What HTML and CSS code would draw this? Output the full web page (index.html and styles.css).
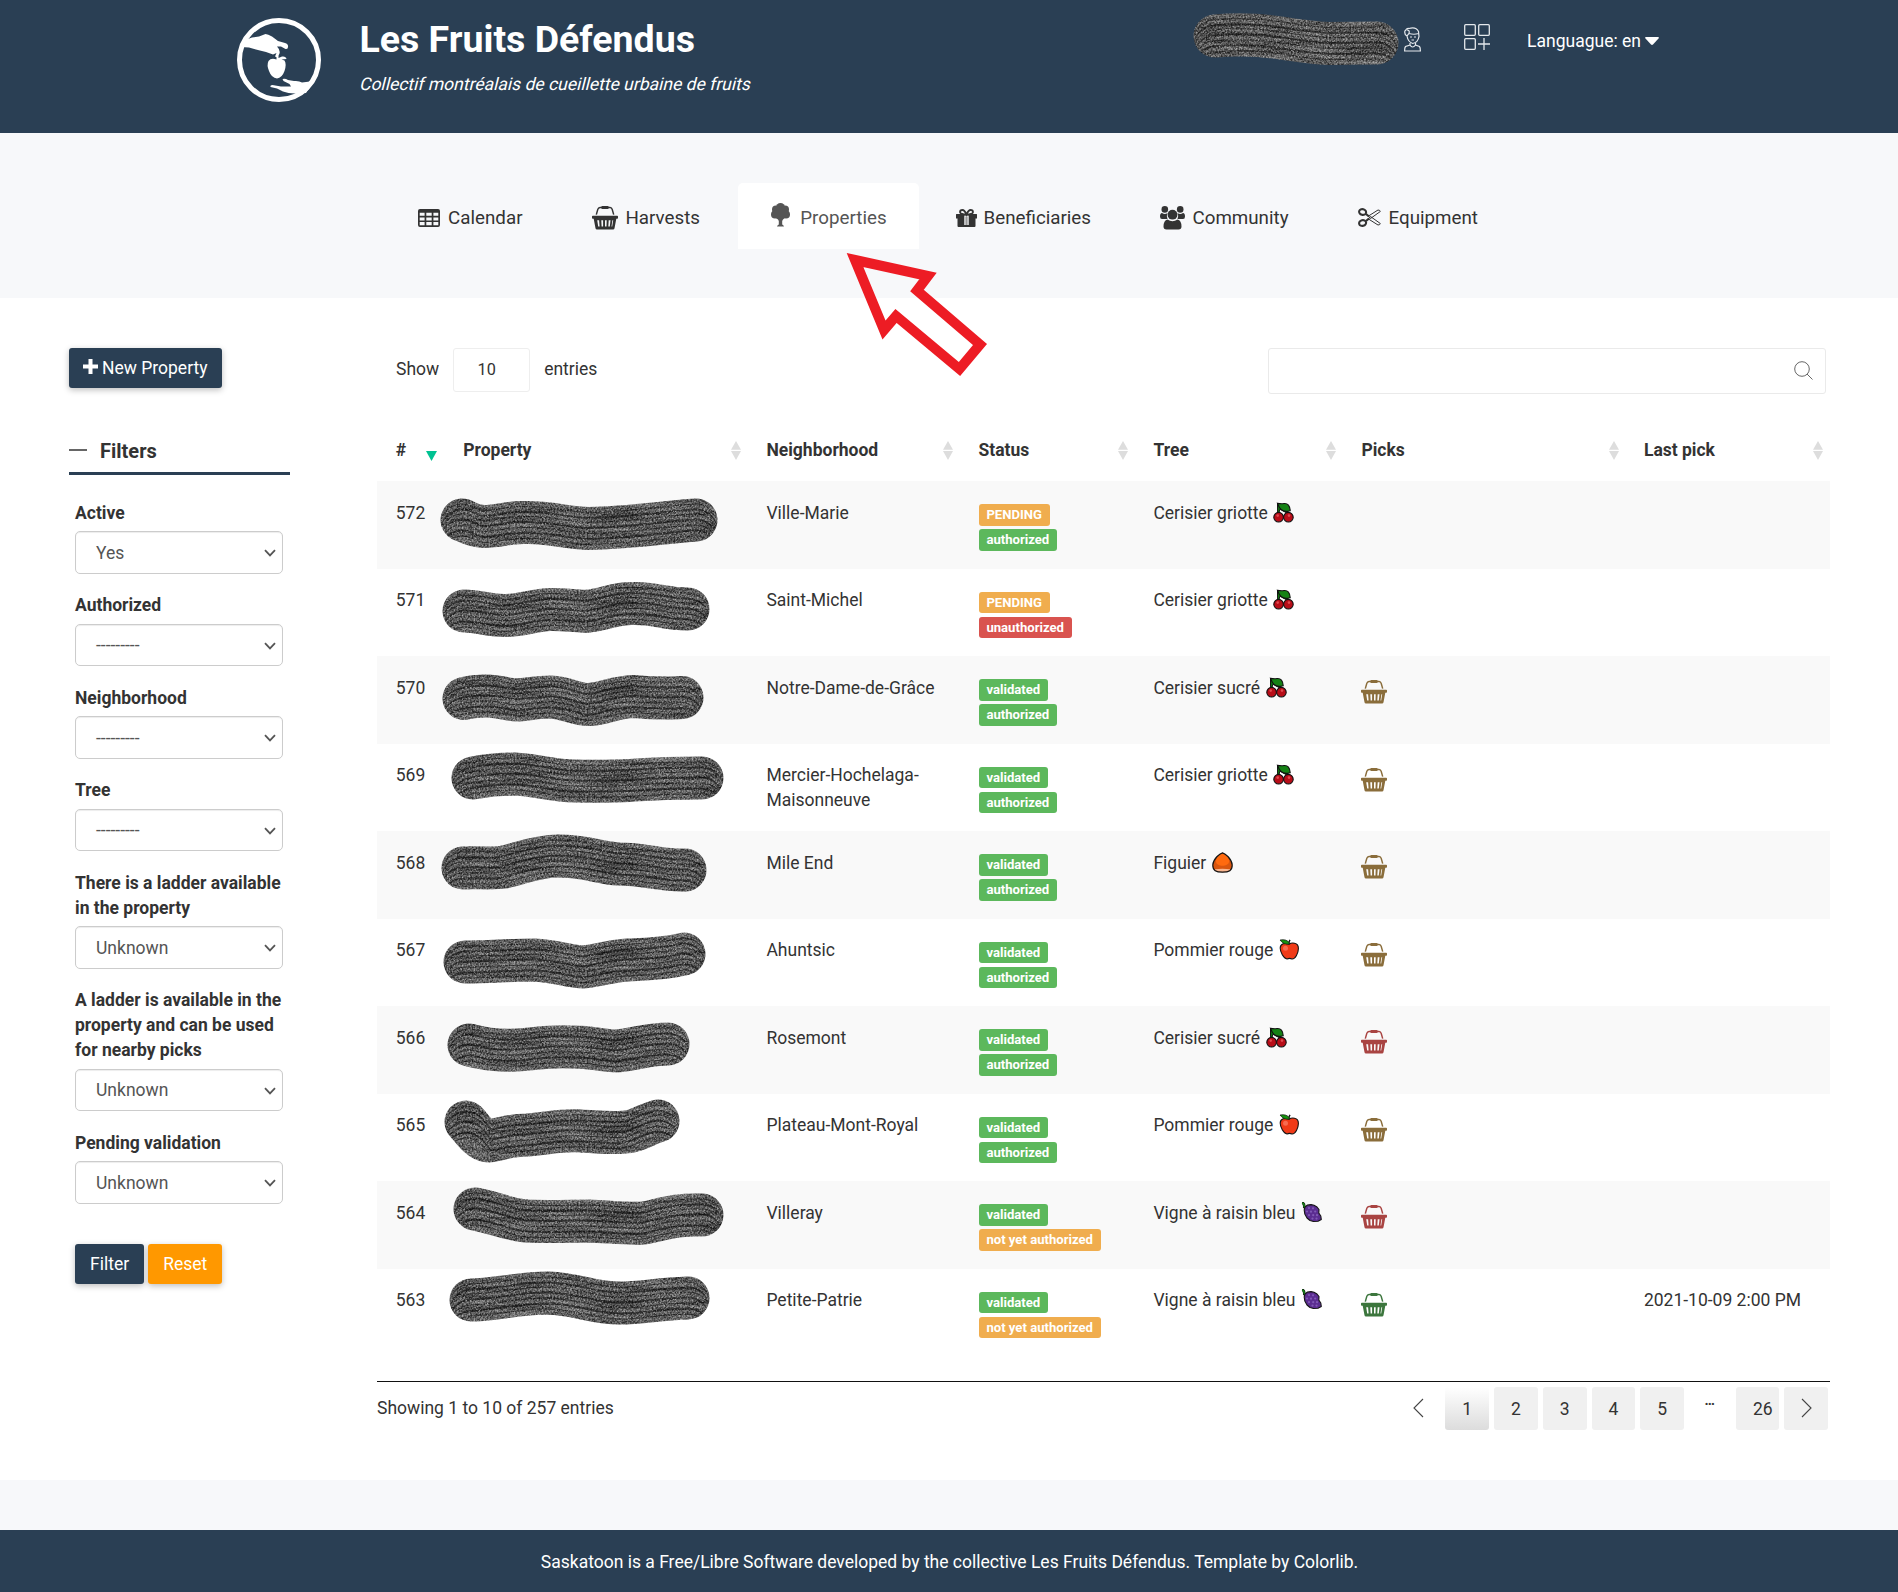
FILE: index.html
```html
<!DOCTYPE html>
<html lang="en">
<head>
<meta charset="utf-8">
<title>Les Fruits Défendus - Properties</title>
<link rel="stylesheet" href="styles.css">
</head>
<body>
<svg class="defs" aria-hidden="true">
  <defs>
    <filter id="ink" filterUnits="userSpaceOnUse" x="-10" y="-10" width="320" height="110" color-interpolation-filters="sRGB">
      <feTurbulence type="fractalNoise" baseFrequency="0.02 0.22" numOctaves="2" seed="4" result="streak"/>
      <feTurbulence type="fractalNoise" baseFrequency="0.6" numOctaves="2" seed="9" result="grain"/>
      <feColorMatrix in="streak" type="matrix" values=".3 0 0 0 .05  .3 0 0 0 .05  .3 0 0 0 .05  0 0 0 0 1" result="s"/>
      <feColorMatrix in="grain" type="matrix" values=".8 0 0 0 -0.22  .8 0 0 0 -0.22  .8 0 0 0 -0.22  0 0 0 0 1" result="g"/>
      <feComposite in="s" in2="g" operator="arithmetic" k2="1" k3="1" result="mix"/>
      <feOffset in="SourceAlpha" dy="5" result="a1"/><feOffset in="SourceAlpha" dy="6" result="b1"/>
      <feOffset in="SourceAlpha" dy="10" result="a2"/><feOffset in="SourceAlpha" dy="12" result="b2"/>
      <feOffset in="SourceAlpha" dy="15" result="a3"/><feOffset in="SourceAlpha" dy="16" result="b3"/>
      <feOffset in="SourceAlpha" dy="20" result="a4"/><feOffset in="SourceAlpha" dy="22" result="b4"/>
      <feOffset in="SourceAlpha" dy="26" result="a5"/><feOffset in="SourceAlpha" dy="27" result="b5"/>
      <feOffset in="SourceAlpha" dy="31" result="a6"/><feOffset in="SourceAlpha" dy="33" result="b6"/>
      <feOffset in="SourceAlpha" dy="37" result="a7"/><feOffset in="SourceAlpha" dy="38" result="b7"/>
      <feComposite in="a1" in2="b1" operator="out" result="l1"/>
      <feComposite in="a2" in2="b2" operator="out" result="l2"/>
      <feComposite in="a3" in2="b3" operator="out" result="l3"/>
      <feComposite in="a4" in2="b4" operator="out" result="l4"/>
      <feComposite in="a5" in2="b5" operator="out" result="l5"/>
      <feComposite in="a6" in2="b6" operator="out" result="l6"/>
      <feComposite in="a7" in2="b7" operator="out" result="l7"/>
      <feMerge result="bands"><feMergeNode in="l1"/><feMergeNode in="l2"/><feMergeNode in="l3"/><feMergeNode in="l4"/><feMergeNode in="l5"/><feMergeNode in="l6"/><feMergeNode in="l7"/></feMerge>
      <feDisplacementMap in="bands" in2="grain" scale="3" xChannelSelector="R" yChannelSelector="G" result="rough"/>
      <feComponentTransfer in="rough" result="lines"><feFuncA type="linear" slope=".55"/></feComponentTransfer>
      <feMerge result="all"><feMergeNode in="mix"/><feMergeNode in="lines"/></feMerge>
      <feComposite in="all" in2="SourceAlpha" operator="in"/>
    </filter>
  </defs>
  <symbol id="basket" viewBox="0 0 26 24">
    <path d="M4.300 8.600 5.800 3.400Q6.300 1.600 8 1.500H18Q19.700 1.600 20.200 3.400L21.700 8.600" fill="none" stroke="currentColor" stroke-width="1.500"/>
    <rect x="9.300" y="0" width="7.400" height="2.900" rx="1" fill="currentColor"/>
    <path fill="currentColor" fill-rule="evenodd" d="M.8 9.700H25.200Q26 9.700 26 10.500V12Q26 12.800 25.200 12.800H24.300L22.500 22.300Q22.300 23.600 21 23.600H5Q3.700 23.600 3.500 22.300L1.700 12.800H.8Q0 12.800 0 12V10.500Q0 9.700.8 9.700ZM5.200 14.300 6.200 20.500H7.600L7.100 14.300ZM9.300 14.300 9.600 20.500H11.100V14.300ZM13 14.300V20.500H14.500L14.700 14.300ZM16.700 14.300 16.300 20.500H17.800L18.500 14.300ZM20.400 14.300 19.500 20.500H20.200L21.200 14.300Z"/>
  </symbol>
  <symbol id="cherry" viewBox="0 0 21 21">
    <path d="M4.500 1 4.600 10.500 6 10.500 7 7 14.500 11.500 15 9.500 8 5Z" fill="#0b7a0b" stroke="#111" stroke-width="1"/>
    <path d="M4.500 1.200Q8 2 11 1.500 16.800 1 17.200 8.800 11 10.500 8 7.500 6 5.500 4.500 1.200Z" fill="#158215" stroke="#111" stroke-width="1.100"/>
    <circle cx="5.600" cy="15.200" r="4.800" fill="#b80d18" stroke="#111" stroke-width="1.100"/>
    <circle cx="15.400" cy="15.200" r="4.800" fill="#b80d18" stroke="#111" stroke-width="1.100"/>
    <circle cx="4.700" cy="13.600" r="1.300" fill="#e04a50"/><circle cx="16" cy="13.600" r="1.300" fill="#e04a50"/>
  </symbol>
  <symbol id="fig" viewBox="0 0 21 21">
    <path d="M10.500.8C13 1.500 19.800 6.500 20.200 13 20.300 18.500 17 20.200 10.500 20.200S.7 18.500.8 13C1.200 6.500 8 1.500 10.500.8Z" fill="#d9560f"/>
    <path d="M10.500 1C14 2.500 17.500 6 17 10 16 15 5 15 4 10 3.500 6 7 2.500 10.500 1Z" fill="#ff6a0f"/>
    <path d="M2.500 17.300Q10.500 16 18.500 17.300 16.500 20 10.500 20T2.500 17.300Z" fill="#f9b690"/>
    <path d="M10.500.8C13 1.500 19.800 6.500 20.200 13 20.300 18.500 17 20.200 10.500 20.200S.7 18.500.8 13C1.200 6.500 8 1.500 10.500.8Z" fill="none" stroke="#151515" stroke-width="1.200"/>
  </symbol>
  <symbol id="apple" viewBox="0 0 21 21">
    <path d="M10 5.200C12 3.800 19.500 2.500 19.400 9.500 19.300 14 16.500 20.200 13 20 11 19 10 19 8 20 4.500 19.500 1.200 13 1.200 9 1.300 4.500 6 3.500 10 5.200Z" fill="#f03a17" stroke="#151515" stroke-width="1.100"/>
    <circle cx="6.500" cy="9.200" r="2.500" fill="#f76b50"/>
    <path d="M10 5Q9.500 3 11 .8" stroke="#151515" stroke-width="1.500" fill="none"/>
    <path d="M1 1Q8-.5 11 4.800 5 6.500 1 1Z" fill="#15940f" stroke="#151515" stroke-width=".7"/>
  </symbol>
  <symbol id="grape" viewBox="0 0 21 21">
    <path d="M1 .8Q3.500 1 3.300 5L6 6" stroke="#111" stroke-width="2.600" fill="none"/>
    <path d="M1.200 1Q3.500 1.500 3.300 5L6 6.500" stroke="#168b16" stroke-width="1.400" fill="none"/>
    <path d="M4 5 6.500 3 10 2.600 13 3.200 16 5 18 7.500 17.800 11 19.800 14 20.300 17.500 17 19.300 12.500 19.500 9 18.500 6 16 3.800 12 3.200 8Z" fill="#5b2d91" stroke="#151515" stroke-width="1.100" stroke-linejoin="round"/>
    <g fill="#8059b5"><circle cx="8" cy="6" r="1.100"/><circle cx="12" cy="6.300" r="1.100"/><circle cx="6" cy="9.500" r="1.100"/><circle cx="10" cy="9.700" r="1.100"/><circle cx="14.200" cy="9.500" r="1.100"/><circle cx="8" cy="13.200" r="1.100"/><circle cx="12.200" cy="13.200" r="1.100"/><circle cx="16" cy="13.200" r="1.100"/><circle cx="11.500" cy="16.600" r="1.100"/><circle cx="15.500" cy="16.600" r="1.100"/></g>
  </symbol>
  <symbol id="sort" viewBox="0 0 10 19"><path d="M5 0 10 8.700H0ZM5 19 0 10H10Z" fill="#ddd"/></symbol>
  <symbol id="chevron" viewBox="0 0 12 8"><path d="M1 1.200 6 6.400 11 1.200" fill="none" stroke="#555" stroke-width="1.800"/></symbol>
</svg>

<header class="header">
  <svg class="logo" viewBox="0 0 84 84">
    <circle cx="42" cy="42" r="39.500" fill="none" stroke="#fff" stroke-width="5"/>
    <path fill="#fff" d="M4 29 8 22 15 19.500 22 18.500 28.500 16Q31 16 35 18.500L41 23 48 25Q51.500 26 51 29 51 31.500 48.500 31L44 28.500 40 28.500Q43.500 32 42.500 35.500L40.500 39.500 38 38.500 39.500 35 36 36.500 29 34Q20 32 12 29.500Z"/>
    <path fill="#fff" d="M39.500 41.500Q34 39.500 31.500 43 29.500 47 32 53 34.500 60 40 60.500 45 60 47.500 53 49.800 46 47.500 42.500L44.500 41.500 49.500 41Q49 38 45 38.500L41.500 40 41.500 37.500H39.500Z"/>
    <path fill="#fff" d="M45.500 61Q48 60 51 62L57 63Q62 62.500 65 64.500L77 63 69 75 61 75.500Q52 76 46 73.500L40 70.500 33.500 69Q33 67 35.500 67L44 68.500 54 68.500 52.500 66 46.500 63Z"/>
  </svg>
  <div class="brand">
    <h1 class="brand-name">Les Fruits Défendus</h1>
    <p class="brand-tag">Collectif montréalais de cueillette urbaine de fruits</p>
  </div>
  <div class="tools">
    <svg class="user-scribble" viewBox="0 0 206 52"><path class="ink" d="M22 22Q55 19 88 24T135 29.500L184 29"/></svg>
    <svg class="user-icon" viewBox="0 0 17 25" fill="none" stroke="#e4e8ec" stroke-width="1.200"><path d="M1.500 4Q2 1 5 1.500 12-.5 14.500 4.500L15 9.500Q14 15.500 8.700 16.500 4 15 3 9L5 6.500Q10 8 14.500 6.500M3 9Q0 7.500 1 3.500M3 3Q6 3 5 6.500M6 10H8M10 10H12M7.500 13H10M6 16V18L1.500 19.500Q.6 20.500.6 24H16.400Q16.400 20.500 15.500 19.500L11.500 18V16M6 18Q8.500 22 11.500 18"/></svg>
    <svg class="apps-icon" viewBox="0 0 26 26" fill="none" stroke="#e4e8ec" stroke-width="1.300"><rect x=".7" y=".7" width="10.600" height="10.600" rx="1"/><rect x="14.700" y=".7" width="10.600" height="10.600" rx="1"/><rect x=".7" y="14.700" width="10.600" height="10.600" rx="1"/><path d="M20 14V26M14 20H26"/></svg>
    <a class="lang">Languague: en<svg class="caret" viewBox="0 0 14 8"><path d="M1 0H13Q14.500.3 13.500 1.500L8 7.500Q7 8.300 6 7.500L.5 1.500Q-.5.3 1 0Z" fill="#fff"/></svg></a>
  </div>
</header>

<nav class="nav">
  <ul class="tabs">
    <li class="tab"><svg class="i-cal" viewBox="0 0 22 18"><path fill="currentColor" fill-rule="evenodd" d="M2 0H20Q22 0 22 2V16Q22 18 20 18H2Q0 18 0 16V2Q0 0 2 0ZM1.700 3.700V6.800H6.600V3.700ZM8.300 3.700V6.800H13.700V3.700ZM15.400 3.700V6.800H20.300V3.700ZM1.700 8.400V11.500H6.600V8.400ZM8.300 8.400V11.500H13.700V8.400ZM15.400 8.400V11.500H20.300V8.400ZM1.700 13.100V16.300H6.600V13.100ZM8.300 13.100V16.300H13.700V13.100ZM15.400 13.100V16.300H20.300V13.100Z"/></svg>Calendar</li>
    <li class="tab"><svg class="i-basket"><use href="#basket"/></svg>Harvests</li>
    <li class="tab tab-active"><svg class="i-tree" viewBox="0 0 19 24" fill="currentColor"><circle cx="9.500" cy="4.500" r="4.500"/><circle cx="5" cy="6.500" r="4"/><circle cx="14" cy="6.500" r="4"/><circle cx="4" cy="11.500" r="4"/><circle cx="15" cy="11.500" r="4"/><path d="M4 6H15V14L12 16.500 11.200 18V21.500Q12.500 22 13 23.500H6Q6.500 22 7.800 21.500V18L7 16.500 4 14.500Z"/></svg>Properties</li>
    <li class="tab"><svg class="i-gift" viewBox="0 0 21 18"><path fill="currentColor" d="M.5 5H20.500Q21 5 21 5.500V9.500H19.500V17Q19.500 18 18.500 18H2.500Q1.500 18 1.500 17V9.500H0V5.500Q0 5 .5 5Z"/><path d="M8.300 6.500H12.700V16H8.300Z" fill="#f7f8fa"/><path d="M9.400 7.500H11.600V16H9.400Z" fill="#999"/><path d="M10.500 5.500Q8.500 1 6.500 1 4 1 4 3.200 4.200 5.500 10.500 5.500 16.800 5.500 17 3.200 17 1 14.500 1 12.500 1 10.500 5.500Z" fill="#f7f8fa" stroke="currentColor" stroke-width="1.800"/></svg>Beneficiaries</li>
    <li class="tab"><svg class="i-users" viewBox="0 0 25 24" fill="currentColor"><circle cx="4.800" cy="3.400" r="3.300"/><circle cx="20.200" cy="3.400" r="3.300"/><path d="M2 7Q4.800 9 7.500 7 6 10.500 7.500 13H2Q0 13 0 10.500 0 7 2 7ZM23 7Q20.200 9 17.500 7 19 10.500 17.500 13H23Q25 13 25 10.500 25 7 23 7Z"/><circle cx="12.500" cy="8.700" r="4.900"/><path d="M7.500 13.500Q12.500 17 17.500 13.500 21.500 14.500 21.500 20.500 21.500 23.500 18.500 23.500H6.500Q3.500 23.500 3.500 20.500 3.500 14.500 7.500 13.500Z"/></svg>Community</li>
    <li class="tab"><svg class="i-cut" viewBox="0 0 23 19" fill="none" stroke="currentColor"><ellipse cx="4.600" cy="4" rx="3.500" ry="2.800" stroke-width="2.100" transform="rotate(15 4.600 4)"/><ellipse cx="4.600" cy="15" rx="3.500" ry="2.800" stroke-width="2.100" transform="rotate(-15 4.600 15)"/><path d="M8 6 11 8.500M8 13 11 10.500" stroke-width="2.200"/><path d="M10.500 8 20 2Q22 2 22.300 3.500L12.500 10.500ZM10.500 11 20 17Q22 17 22.300 15.500L12.500 8.500Z" stroke-width="1"/></svg>Equipment</li>
  </ul>
  <svg class="arrow" viewBox="0 0 144 130"><path d="M10 10 83 26 72 40.500 135 94.500 114.500 119 51 66 39 80Z" fill="none" stroke="#ed1c24" stroke-width="10"/></svg>
</nav>

<main class="main">
  <aside class="side">
    <a class="btn btn-new"><svg viewBox="0 0 15 15"><path d="M5.500 0H9.500V5.500H15V9.500H9.500V15H5.500V9.500H0V5.500H5.500Z" fill="#fff"/></svg>New Property</a>
    <h2 class="side-title"><span class="dash"></span>Filters</h2>
    <form class="filters">
      <label class="label">Active</label>
      <div class="select">Yes<svg><use href="#chevron"/></svg></div>
      <label class="label">Authorized</label>
      <div class="select">---------<svg><use href="#chevron"/></svg></div>
      <label class="label">Neighborhood</label>
      <div class="select">---------<svg><use href="#chevron"/></svg></div>
      <label class="label">Tree</label>
      <div class="select">---------<svg><use href="#chevron"/></svg></div>
      <label class="label">There is a ladder available<br>in the property</label>
      <div class="select">Unknown<svg><use href="#chevron"/></svg></div>
      <label class="label">A ladder is available in the<br>property and can be used<br>for nearby picks</label>
      <div class="select">Unknown<svg><use href="#chevron"/></svg></div>
      <label class="label">Pending validation</label>
      <div class="select">Unknown<svg><use href="#chevron"/></svg></div>
      <div class="actions"><a class="btn btn-filter">Filter</a><a class="btn btn-reset">Reset</a></div>
    </form>
  </aside>

  <section class="listing">
    <div class="controls">
      <span>Show</span><span class="length">10</span><span>entries</span>
      <div class="search"><svg viewBox="0 0 19 19" fill="none" stroke="#555" stroke-width=".9"><circle cx="8" cy="8" r="7.300"/><path d="M13 13 18.500 18.500"/></svg></div>
    </div>
    <table class="table">
      <thead>
        <tr><th>#<svg class="sorted" viewBox="0 0 11 10"><path d="M0 0H11L5.500 10Z" fill="#00c292"/></svg></th><th>Property<svg><use href="#sort"/></svg></th><th>Neighborhood<svg><use href="#sort"/></svg></th><th>Status<svg><use href="#sort"/></svg></th><th>Tree<svg><use href="#sort"/></svg></th><th>Picks<svg><use href="#sort"/></svg></th><th>Last pick<svg><use href="#sort"/></svg></th></tr>
      </thead>
      <tbody>
        <tr><td>572</td><td><svg class="scribble"><path class="ink" d="M18 39C24 41 28 45 40 45.500 56 45 66 41 82 41.500 106 41 122 47 145 47.500 180 47 215 42 252 39"/></svg></td><td>Ville-Marie</td><td><span class="tag warn">PENDING</span><br><span class="tag ok">authorized</span></td><td>Cerisier griotte <svg class="fruit"><use href="#cherry"/></svg></td><td></td><td></td></tr>
        <tr><td>571</td><td><svg class="scribble"><path class="ink" d="M20 42C36 42 44 47 62 46.500 80 46 90 41 106 40.500 122 40 134 43 145 42 162 40 172 34 189 34.500 212 34 220 40 244 40"/></svg></td><td>Saint-Michel</td><td><span class="tag warn">PENDING</span><br><span class="tag bad">unauthorized</span></td><td>Cerisier griotte <svg class="fruit"><use href="#cherry"/></svg></td><td></td><td></td></tr>
        <tr><td>570</td><td><svg class="scribble"><path class="ink" d="M20 42.500C30 40 36 40 43 40 56 40 62 44 74 44 86 43 94 41 106 41 124 42 132 49 146 48.500 162 47 172 41 189 40.500 206 42 216 43 238 41.500"/></svg></td><td>Notre-Dame-de-Grâce</td><td><span class="tag ok">validated</span><br><span class="tag ok">authorized</span></td><td>Cerisier sucré <svg class="fruit"><use href="#cherry"/></svg></td><td><svg class="pick brown"><use href="#basket"/></svg></td><td></td></tr>
        <tr><td>569</td><td><svg class="scribble"><path class="ink" d="M29 34C44 31 56 30 70 30 94 31 108 37 130 37 152 38 166 37 185 36.500 206 35 216 34 258 34"/></svg></td><td>Mercier-Hochelaga-Maisonneuve</td><td><span class="tag ok">validated</span><br><span class="tag ok">authorized</span></td><td>Cerisier griotte <svg class="fruit"><use href="#cherry"/></svg></td><td><svg class="pick brown"><use href="#basket"/></svg></td><td></td></tr>
        <tr><td>568</td><td><svg class="scribble"><path class="ink" d="M19 37C34 36 46 38 60 36 76 33 92 25 114 25 142 25 156 32 175 33 200 33 220 40 241 39"/></svg></td><td>Mile End</td><td><span class="tag ok">validated</span><br><span class="tag ok">authorized</span></td><td>Figuier <svg class="fruit"><use href="#fig"/></svg></td><td><svg class="pick brown"><use href="#basket"/></svg></td><td></td></tr>
        <tr><td>567</td><td><svg class="scribble"><path class="ink" d="M21 43C45 43 66 41 90 41 114 42 124 48 140 48 158 46 166 42 184 41 204 40 220 40 240 35"/></svg></td><td>Ahuntsic</td><td><span class="tag ok">validated</span><br><span class="tag ok">authorized</span></td><td>Pommier rouge <svg class="fruit"><use href="#apple"/></svg></td><td><svg class="pick brown"><use href="#basket"/></svg></td><td></td></tr>
        <tr><td>566</td><td><svg class="scribble"><path class="ink" d="M25 39C40 43 56 45 72 44 90 43 104 40 126 41 148 40 154 45 174 45 192 43 206 38 224 38"/></svg></td><td>Rosemont</td><td><span class="tag ok">validated</span><br><span class="tag ok">authorized</span></td><td>Cerisier sucré <svg class="fruit"><use href="#cherry"/></svg></td><td><svg class="pick red"><use href="#basket"/></svg></td><td></td></tr>
        <tr><td>565</td><td><svg class="scribble"><path class="ink" d="M22 28C28 34 34 45 44 47 58 45 66 41 84 41 106 39 118 36 136 37 158 38 174 40 188 37 198 34 206 29 214 27"/></svg></td><td>Plateau-Mont-Royal</td><td><span class="tag ok">validated</span><br><span class="tag ok">authorized</span></td><td>Pommier rouge <svg class="fruit"><use href="#apple"/></svg></td><td><svg class="pick brown"><use href="#basket"/></svg></td><td></td></tr>
        <tr><td>564</td><td><svg class="scribble"><path class="ink" d="M31 28C48 31 62 38 82 40 106 41 126 40 145 40 168 41 184 43 200 42 220 38 232 33 258 34"/></svg></td><td>Villeray</td><td><span class="tag ok">validated</span><br><span class="tag warn">not yet authorized</span></td><td>Vigne à raisin bleu <svg class="fruit"><use href="#grape"/></svg></td><td><svg class="pick red"><use href="#basket"/></svg></td><td></td></tr>
        <tr><td>563</td><td><svg class="scribble"><path class="ink" d="M27 31C50 31 74 24 104 24 134 25 148 34 176 34 198 34 214 30 244 29"/></svg></td><td>Petite-Patrie</td><td><span class="tag ok">validated</span><br><span class="tag warn">not yet authorized</span></td><td>Vigne à raisin bleu <svg class="fruit"><use href="#grape"/></svg></td><td><svg class="pick green"><use href="#basket"/></svg></td><td>2021-10-09 2:00 PM</td></tr>
      </tbody>
    </table>
    <div class="foot">
      <span class="info">Showing 1 to 10 of 257 entries</span>
      <div class="pages">
        <span class="page plain"><svg viewBox="0 0 11 20"><path d="M10 1 1 10 10 19"/></svg></span>
        <span class="page current">1</span><span class="page">2</span><span class="page">3</span><span class="page">4</span><span class="page">5</span>
        <span class="dots">…</span>
        <span class="page last">26</span><span class="page"><svg viewBox="0 0 11 20"><path d="M1 1 10 10 1 19"/></svg></span>
      </div>
    </div>
  </section>
</main>

<footer class="footer">Saskatoon is a Free/Libre Software developed by the collective Les Fruits Défendus. Template by Colorlib.</footer>
</body>
</html>
```
FILE: styles.css
```css
* { box-sizing: border-box; }
body { margin: 0; background: #f7f8fa; font: 17.5px/25px Roboto, sans-serif; color: #333; }
svg { display: block; flex: none; }
h1, h2, p, ul { margin: 0; padding: 0; }
.defs { position: absolute; width: 0; height: 0; }
.ink { fill: none; stroke: #555; stroke-width: 43px; stroke-linecap: round; stroke-linejoin: round; filter: url(#ink); }

.header { display: flex; align-items: flex-start; height: 133px; padding: 18px 239px 0 237px; background: #2a3f54; color: #fff; }
.logo { width: 84px; height: 84px; }
.brand { margin: 1px 0 0 38.500px; }
.brand-name { font-size: 37.5px; line-height: 41px; font-weight: 700; white-space: nowrap; }
/* The italic face is narrower than the upright one, so the upright face is slanted. */
.brand-tag { width: max-content; margin-top: 12px; white-space: nowrap; transform: translateX(-1px) skewX(-14deg); transform-origin: 0 18px; }
.tools { display: flex; align-items: flex-start; margin-left: auto; margin-top: -4px; }
.user-scribble { width: 206px; height: 52px; overflow: visible; }
.user-icon { width: 17px; height: 25px; margin: 13px 43px 0 5px; }
.apps-icon { width: 26px; height: 26px; margin: 10px 37px 0 0; }
.lang { display: flex; align-items: center; margin-top: 15px; white-space: nowrap; }
.caret { width: 14px; height: 8px; margin: 0 0 2px 4px; }

.nav { position: relative; height: 165px; padding: 50px 0 0 385px; }
.tabs { display: flex; gap: 4.500px; list-style: none; }
.tab { display: flex; align-items: center; height: 66px; padding: 4.500px 32px 0 33px; border-radius: 5px 5px 0 0; font-size: 18.75px; white-space: nowrap; }
.tab svg { margin: 0 7.500px 1.500px 0; }
.tab-active { margin-left: 1.600px; background: #fff; color: #555; }
.tab .i-cal { width: 22px; height: 18px; margin-right: 8.100px; }
.i-basket { width: 26px; height: 24px; }
.tab .i-tree { width: 19px; height: 24px; margin: 0 10.200px 7.500px 0; }
.tab .i-gift { width: 21px; height: 18px; margin-right: 6.500px; }
.tab .i-users { width: 25px; height: 24px; margin-left: -.5px; }
.i-cut { width: 23px; height: 19px; }
.arrow { position: absolute; left: 845px; top: 117px; width: 144px; height: 130px; overflow: visible; z-index: 2; }

.main { display: flex; align-items: flex-start; height: 1182px; padding: 50px 68px 0 69px; background: #fff; }
.side { width: 221px; margin-right: 87px; }
.btn { display: inline-flex; align-items: center; height: 40px; border-radius: 3px; color: #fff; background: #2a3f54; box-shadow: 0 2px 6px rgba(0, 0, 0, .26); white-space: nowrap; }
.btn-new { width: 153px; padding-left: 14px; }
.btn-new svg { width: 15px; height: 15px; margin: -3px 4px 0 0; }
.side-title { display: flex; align-items: center; margin-top: 49px; padding-bottom: 7px; border-bottom: 3px solid #2a3f54; font-size: 20px; line-height: 28px; }
.dash { width: 18px; height: 1.500px; margin: 0 13px 2px 0; background: #666; }
.filters { padding: 25px 7px 0 6px; }
.label { display: block; padding-top: .750px; margin-bottom: 5.500px; font-weight: 700; white-space: nowrap; }
.select { display: flex; align-items: center; justify-content: space-between; height: 42.500px; margin-bottom: 18.750px; padding: 1.500px 6px 0 20px; border: 1px solid #ccc; border-radius: 5px; box-shadow: inset 0 1px 1px rgba(0, 0, 0, .075); color: #555; }
.select svg { width: 12px; height: 8px; }
.actions { display: flex; gap: 4px; padding-top: 21.500px; }
.btn-filter { padding: 1px 15px 0; }
.btn-reset { padding: 1px 15px 0; background: #ff9800; }

.listing { width: 1453px; }
.controls { display: flex; align-items: flex-start; height: 91px; padding-left: 19px; }
.controls > span { margin-top: 8.500px; }
.controls > .length { width: 77px; height: 44px; margin: 0 14px 0 14px; padding: 8px 10px 0 0; border: 1px solid #eee; border-radius: 3px; font-size: 16.250px; text-align: center; }
.search { display: flex; justify-content: flex-end; width: 558px; height: 46px; margin: 0 4px 0 auto; padding: 12px 12.500px; border: 1px solid #eaeaea; border-radius: 3px; }
.search svg { width: 19px; height: 19px; }

.table, .table thead, .table tbody { display: block; }
.table tr { display: grid; grid-template-columns: 67.500px 303.200px 212.100px 174.900px 208px 282.500px 204.800px; }
.table th { display: flex; align-items: flex-start; justify-content: space-between; height: 42px; padding: 0 6.500px 0 18.750px; margin-top: -1.500px; font-weight: 700; text-align: left; white-space: nowrap; }
.table thead { height: 42.250px; }
.table th svg { width: 10px; height: 19px; margin-top: 3.500px; }
.table th .sorted { width: 11px; height: 10px; margin: 13.500px 1.200px 0 0; }
.table td { position: relative; height: 87.500px; padding: 19.500px 18.750px 0; }
.table td:last-child { white-space: nowrap; padding-right: 0; }
.table tbody tr:nth-child(odd) { background: #f9f9f9; }
.scribble { position: absolute; left: -1px; top: 0; width: 300px; height: 87px; overflow: visible; }
.tag { padding: .2em .6em .3em; border-radius: 3px; font-size: 13.125px; line-height: 1; font-weight: 700; color: #fff; white-space: nowrap; }
.warn { background: #f0ad4e; }
.ok { background: #5cb85c; }
.bad { background: #d9534f; }
.fruit { display: inline-block; width: 21px; height: 21px; margin: -2px 0 0 1.300px; vertical-align: -4px; }
.pick { width: 26px; height: 24px; margin-top: 4.400px; }
.brown { color: #8a6d3b; }
.red { color: #a94442; }
.green { color: #3c763d; }

.foot { display: flex; justify-content: space-between; margin-top: 24.500px; padding-right: 2px; border-top: 1px solid #111; }
.info { padding-top: 14px; }
.pages { display: flex; gap: 5px; padding-top: 5px; }
.page { display: flex; align-items: center; justify-content: center; width: 43.750px; height: 43px; padding-top: 2px; border-radius: 3px; background: #f0f0f0; }
.page svg { width: 11px; height: 20px; margin-top: -2px; fill: none; stroke: #444; stroke-width: 1.100; }
.plain { background: none; }
.current { background: linear-gradient(#fff, #dcdcdc); }
.last { padding-left: 11px; }
.dots { width: 41.500px; text-align: center; font-size: 14px; font-weight: 700; padding-top: 1px; }

.footer { height: 62px; margin-top: 50px; padding: 19.500px 0 0 1px; background: #2a3f54; color: #fff; text-align: center; }
```
